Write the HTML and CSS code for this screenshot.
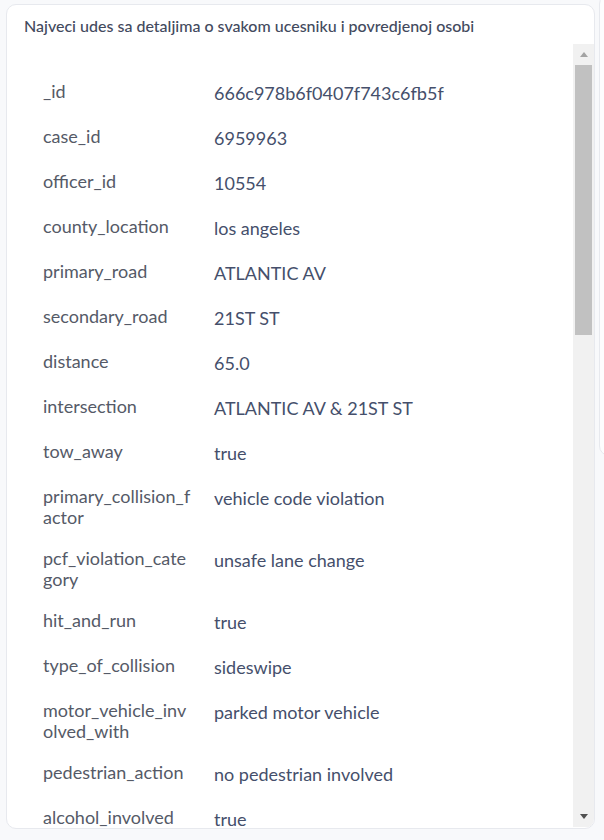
FILE: index.html
```html
<!DOCTYPE html>
<html>
<head>
<meta charset="utf-8">
<link rel="stylesheet" href="styles.css">
</head>
<body>
<div class="page">
  <section class="card">
    <h2 class="title">Najveci udes sa detaljima o svakom ucesniku i povredjenoj osobi</h2>
    <div class="viewer">
      <div class="scroll">
        <div class="table">
          <div class="row"><div class="key">_id</div><div class="val">666c978b6f0407f743c6fb5f</div></div>
          <div class="row"><div class="key">case_id</div><div class="val">6959963</div></div>
          <div class="row"><div class="key">officer_id</div><div class="val">10554</div></div>
          <div class="row"><div class="key">county_location</div><div class="val">los angeles</div></div>
          <div class="row"><div class="key">primary_road</div><div class="val">ATLANTIC AV</div></div>
          <div class="row"><div class="key">secondary_road</div><div class="val">21ST ST</div></div>
          <div class="row"><div class="key">distance</div><div class="val">65.0</div></div>
          <div class="row"><div class="key">intersection</div><div class="val">ATLANTIC AV &amp; 21ST ST</div></div>
          <div class="row"><div class="key">tow_away</div><div class="val">true</div></div>
          <div class="row"><div class="key">primary_collision_factor</div><div class="val">vehicle code violation</div></div>
          <div class="row"><div class="key">pcf_violation_category</div><div class="val">unsafe lane change</div></div>
          <div class="row"><div class="key">hit_and_run</div><div class="val">true</div></div>
          <div class="row"><div class="key">type_of_collision</div><div class="val">sideswipe</div></div>
          <div class="row"><div class="key">motor_vehicle_involved_with</div><div class="val">parked motor vehicle</div></div>
          <div class="row"><div class="key">pedestrian_action</div><div class="val">no pedestrian involved</div></div>
          <div class="row"><div class="key">alcohol_involved</div><div class="val">true</div></div>
        </div>
      </div>
      <div class="scrollbar">
        <div class="sb-btn"><span class="arrow-up"></span></div>
        <div class="sb-track"><div class="sb-thumb"></div></div>
        <div class="sb-btn"><span class="arrow-down"></span></div>
      </div>
    </div>
  </section>
  <section class="card side"></section>
</div>
</body>
</html>
```

FILE: styles.css
```css
html, body {
  margin: 0;
  padding: 0;
  background: #f8f9fb;
  overflow: hidden;
  width: 604px;
  height: 840px;
}
.page {
  display: flex;
  gap: 4px;
  align-items: flex-start;
  padding: 4px 0 0 6px;
  font-family: Lato, "Noto Sans", sans-serif;
}
.card {
  flex: 0 0 auto;
  box-sizing: border-box;
  width: 589px;
  height: 825px;
  background: #fff;
  border: 1px solid #e7e9ee;
  border-radius: 10px;
  display: flex;
  flex-direction: column;
  overflow: hidden;
}
.side {
  width: 300px;
  height: 462px;
  margin-top: -10px;
  background: #fdfdfe;
}
.title {
  margin: 0;
  padding: 11px 0 0 17px;
  height: 28px;
  box-sizing: border-box;
  font-size: 16px;
  line-height: 20px;
  font-weight: 500;
  color: #434a5e;
}
.viewer {
  margin-top: 11px;
  flex: 1 1 auto;
  display: flex;
  min-height: 0;
  padding-bottom: 1px;
}
.scroll {
  flex: 1 1 auto;
  overflow: hidden;
}
.table {
  padding: 27px 0 0 36px;
}
.row {
  display: flex;
  align-items: flex-start;
  padding: 10px 0;
}
.key {
  flex: 0 0 148px;
  margin-right: 23px;
  font-size: 18px;
  line-height: 21px;
  color: #555a67;
  word-break: break-all;
}
.val {
  flex: 1 1 auto;
  font-size: 18px;
  line-height: 25px;
  color: #454f6b;
}
.scrollbar {
  flex: 0 0 21px;
  display: flex;
  flex-direction: column;
  background: #f1f1f1;
}
.sb-btn {
  flex: 0 0 21px;
  display: flex;
  align-items: center;
  justify-content: center;
}
.sb-track {
  flex: 1 1 auto;
  padding: 0 2px;
}
.sb-thumb {
  height: 270px;
  background: #c1c1c1;
}
.arrow-up, .arrow-down {
  width: 0;
  height: 0;
  border-left: 4px solid transparent;
  border-right: 4px solid transparent;
}
.arrow-up {
  border-bottom: 5px solid #a3a3a3;
}
.arrow-down {
  border-top: 5px solid #505050;
}
```
